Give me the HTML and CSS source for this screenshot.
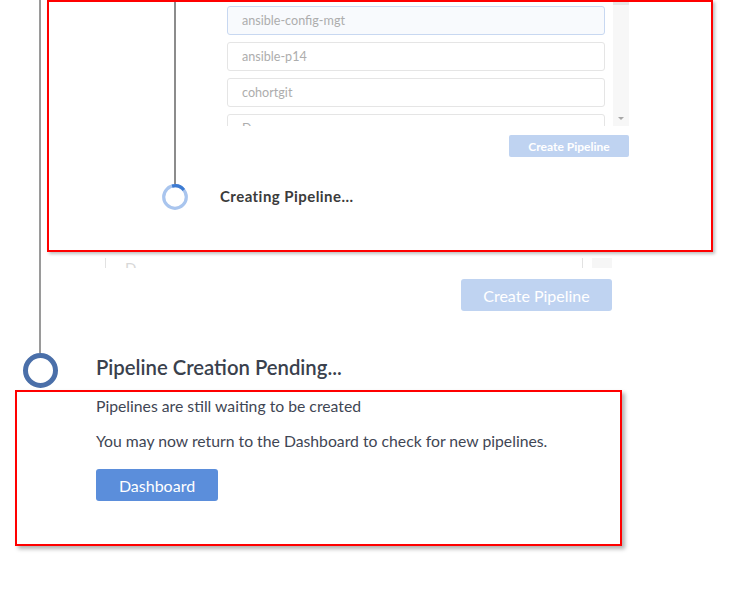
FILE: index.html
```html
<!DOCTYPE html>
<html lang="en">
<head>
<meta charset="utf-8">
<title>Pipeline Creation Pending</title>
<link rel="stylesheet" href="styles.css">
</head>
<body>
<div class="page">
  <section class="step step-upper">
    <div class="rail"><div class="rail-line"></div></div>
    <div class="main">
      <div class="ghost">
        <div class="ghost-list"><span class="ghost-text">D</span></div>
        <div class="ghost-scroll"></div>
      </div>
      <div class="actions">
        <button class="btn btn-lg btn-disabled" type="button">Create Pipeline</button>
      </div>
    </div>
  </section>

  <section class="step step-pending">
    <div class="rail"><span class="node"></span></div>
    <h2 class="step-title">Pipeline Creation Pending...</h2>
  </section>

  <div class="note">
    <p class="note-text">Pipelines are still waiting to be created</p>
    <p class="note-text">You may now return to the Dashboard to check for new pipelines.</p>
    <button class="btn btn-lg btn-primary" type="button">Dashboard</button>
  </div>

  <div class="callout">
    <div class="callout-rail">
      <div class="callout-line"></div>
      <svg class="spinner" width="26" height="26" viewBox="0 0 26 26" aria-hidden="true">
        <circle cx="13" cy="13" r="11.3" fill="none" stroke="#a9c5ee" stroke-width="3.2"/>
        <circle cx="13" cy="13" r="11.3" fill="none" stroke="#3d7bd2" stroke-width="3.2" stroke-dasharray="13 60" transform="rotate(-105 13 13)"/>
      </svg>
    </div>
    <div class="callout-body">
      <div class="repo-box">
        <ul class="repo-list">
          <li class="repo repo-selected">ansible-config-mgt</li>
          <li class="repo">ansible-p14</li>
          <li class="repo">cohortgit</li>
          <li class="repo">Devops</li>
        </ul>
        <div class="scrollbar">
          <span class="scroll-thumb"></span>
          <span class="scroll-arrow"></span>
        </div>
      </div>
      <div class="callout-actions">
        <button class="btn btn-sm btn-disabled" type="button">Create Pipeline</button>
      </div>
      <h3 class="callout-title">Creating Pipeline...</h3>
    </div>
  </div>
</div>
</body>
</html>
```
FILE: styles.css
```css
* { box-sizing: border-box; }

html, body {
  margin: 0;
  padding: 0;
  background: #ffffff;
}

body {
  font-family: Lato, "Open Sans", "Liberation Sans", sans-serif;
  color: #3e4552;
}

.page {
  position: relative;
  width: 732px;
  height: 613px;
  overflow: hidden;
}

.step {
  display: flex;
}

.rail {
  width: 80px;
  flex: none;
  display: flex;
  justify-content: center;
}

/* upper (previous) step */
.step-upper {
  height: 353px;
}

.rail-line {
  width: 2px;
  height: 100%;
  background: #9a9a9a;
}

.main {
  margin-left: 16px;
  width: 516px;
  padding-top: 258px;
}

.ghost {
  display: flex;
  height: 10px;
  overflow: hidden;
}

.ghost-list {
  margin-left: 9px;
  width: 478px;
  border-left: 1px solid #e2e2e2;
  border-right: 1px solid #e2e2e2;
  padding-left: 19px;
  overflow: hidden;
}

.ghost-text {
  display: block;
  margin-top: 1px;
  font-size: 15px;
  line-height: 18px;
  color: #d8d8d8;
}

.ghost-scroll {
  margin-left: 9px;
  width: 20px;
  background: #f6f6f6;
}

.actions {
  display: flex;
  justify-content: flex-end;
  margin-top: 11px;
}

.btn {
  font-family: Lato, "Open Sans", "Liberation Sans", sans-serif;
  border: none;
  color: #ffffff;
  padding: 0;
  cursor: pointer;
}

.btn-lg {
  height: 32px;
  font-size: 16px;
  border-radius: 3px;
}

.actions .btn-lg {
  width: 151px;
}

.btn-disabled {
  background: #bfd3f1;
}

.btn-primary {
  width: 122px;
  background: #5b8edb;
}

/* pending step */
.step-pending {
  height: 34px;
  align-items: center;
}

.node {
  display: block;
  width: 35px;
  height: 35px;
  border: 5px solid #4a6fa9;
  border-radius: 50%;
  background: #ffffff;
}

.step-title {
  margin: 0 0 6px 16px;
  font-size: 20.3px;
  font-weight: 600;
  line-height: 24px;
  color: #3a414d;
}

/* annotation around the message */
.note {
  margin: 3px 0 0 15px;
  width: 607px;
  height: 156px;
  border: 2px solid #ff0000;
  box-shadow: 3px 3px 4px rgba(0, 0, 0, 0.3);
  padding: 4px 0 0 79px;
}

.note-text {
  margin: 0 0 15px;
  font-size: 15.75px;
  line-height: 20px;
  color: #3f4654;
}

.note .btn-primary {
  margin-top: 3px;
}

/* zoomed callout */
.callout {
  position: absolute;
  left: 47px;
  top: 0;
  width: 666px;
  height: 252px;
  border: 2px solid #ff0000;
  background: #ffffff;
  box-shadow: 2px 2px 3px rgba(0, 0, 0, 0.25);
  display: flex;
}

.callout-rail {
  margin-left: 113px;
  width: 26px;
  display: flex;
  flex-direction: column;
  align-items: center;
}

.callout-line {
  width: 2px;
  height: 182px;
  background: #8c8c8c;
}

.spinner {
  display: block;
}

.callout-body {
  margin-left: 32px;
  width: 409px;
}

.repo-box {
  display: flex;
  height: 124px;
  overflow: hidden;
  margin-left: 7px;
}

.repo-list {
  list-style: none;
  margin: 0;
  padding: 4px 0 0;
  width: 378px;
  display: flex;
  flex-direction: column;
  gap: 7px;
}

.repo {
  flex: none;
  height: 29px;
  border: 1px solid #e5e5e5;
  border-radius: 3px;
  padding-left: 14px;
  font-size: 12.6px;
  line-height: 27px;
  color: #adadad;
  background: #ffffff;
}

.repo-selected {
  background: #f8fafd;
  border-color: #c8d8f1;
}

.scrollbar {
  position: relative;
  margin-left: 8px;
  width: 16px;
  background: #f7f7f7;
}

.scroll-thumb {
  position: absolute;
  left: 0;
  right: 0;
  top: 0;
  height: 3px;
  background: #e6e6e6;
}

.scroll-arrow {
  position: absolute;
  left: 5px;
  top: 115px;
  width: 0;
  height: 0;
  border-left: 3px solid transparent;
  border-right: 3px solid transparent;
  border-top: 3px solid #a8a8a8;
}

.callout-actions {
  display: flex;
  justify-content: flex-end;
  margin-top: 9px;
}

.btn-sm {
  width: 120px;
  height: 22px;
  font-size: 12px;
  font-weight: 700;
  border-radius: 2px;
}

.callout-title {
  margin: 30px 0 0;
  font-size: 15px;
  font-weight: 700;
  letter-spacing: 0.45px;
  line-height: 18px;
  color: #3b3b3b;
}
```
